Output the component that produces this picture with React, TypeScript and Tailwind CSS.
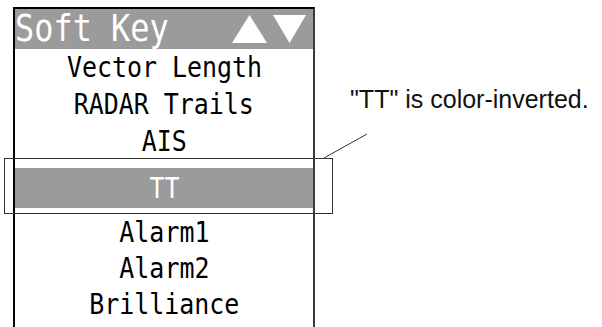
const mono = "font-['DejaVu_Sans_Mono','Liberation_Mono',monospace]";

const items = ["Vector Length", "RADAR Trails", "AIS"];
const lower = ["Alarm1", "Alarm2", "Brilliance"];

function Label({ text }: { text: string }) {
  return (
    <span className="inline-block scale-x-[0.86] whitespace-pre leading-none">
      {text}
    </span>
  );
}

export default function App() {
  return (
    <div className="relative flex h-[327px] w-[602px] overflow-hidden bg-white">
      {/* soft key panel */}
      <div className="ml-[13px] mt-[7px] flex h-[330px] w-[302px] flex-col border-l-2 border-r-2 border-t-2 border-l-black border-r-[#3a3a3a] border-t-black">
        <div className="flex h-[40px] items-center justify-between bg-[#9b9b9b] pr-[7px] text-white">
          <span className={`${mono} -mt-[2px] inline-block origin-left scale-x-[0.84] whitespace-pre text-[38px] leading-none`}>
            Soft Key
          </span>
          <div className="flex gap-[6px]">
            <svg width="35" height="28" viewBox="0 0 35 28">
              <polygon points="17.5,0 35,28 0,28" fill="white" />
            </svg>
            <svg width="33" height="28" viewBox="0 0 33 28">
              <polygon points="0,0 33,0 16.5,28" fill="white" />
            </svg>
          </div>
        </div>

        {items.map((t) => (
          <div key={t} className={`${mono} flex h-[37px] items-center justify-center text-[29px] text-black`}>
            <Label text={t} />
          </div>
        ))}

        <div className="pb-[6px] pt-[8px]">
          <div className={`${mono} flex h-[40px] items-center justify-center bg-[#9b9b9b] text-[29px] text-white`}>
            <Label text="TT" />
          </div>
        </div>

        {lower.map((t) => (
          <div key={t} className={`${mono} flex h-[36px] items-center justify-center text-[29px] text-black`}>
            <Label text={t} />
          </div>
        ))}
      </div>

      <p className="ml-[35px] mt-[87px] whitespace-pre font-['Liberation_Sans',Arial,sans-serif] text-[25px] leading-none text-[#111]">
        "TT" is color-inverted.
      </p>

      {/* callout box around the inverted row */}
      <div className="absolute left-[4px] top-[158px] h-[56px] w-[329px] border border-[#333]" />
      <svg className="absolute left-0 top-0" width="602" height="327">
        <line x1="324" y1="158" x2="367" y2="134" stroke="#333" strokeWidth="1" />
      </svg>
    </div>
  );
}
